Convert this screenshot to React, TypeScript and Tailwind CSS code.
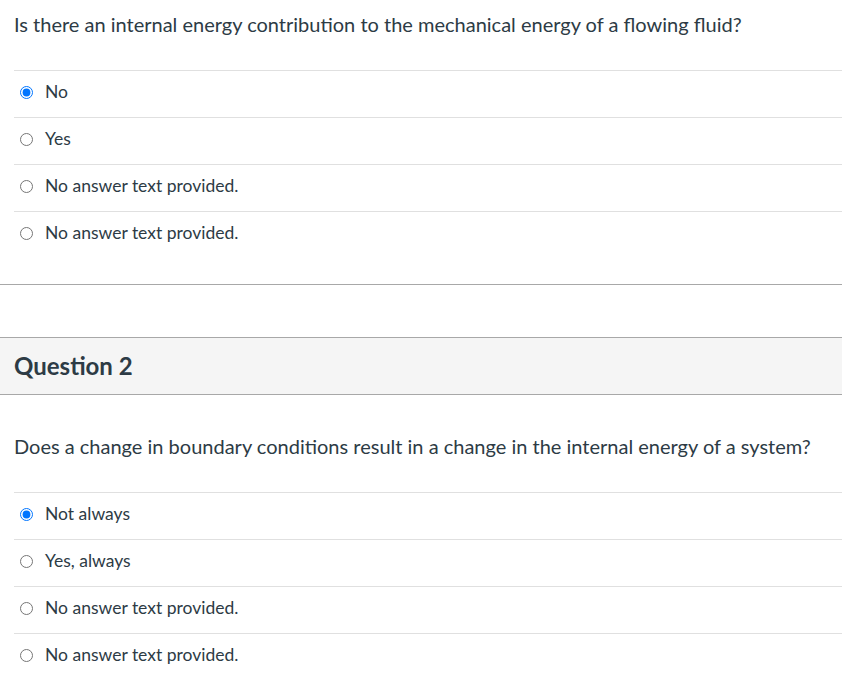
import { useState } from "react";

type Question = { id: string; text: string; answers: string[]; selected: number };

const first: Question = {
  id: "q1",
  text: "Is there an internal energy contribution to the mechanical energy of a flowing fluid?",
  answers: ["No", "Yes", "No answer text provided.", "No answer text provided."],
  selected: 0,
};

const second: Question = {
  id: "q2",
  text: "Does a change in boundary conditions result in a change in the internal energy of a system?",
  answers: ["Not always", "Yes, always", "No answer text provided.", "No answer text provided."],
  selected: 0,
};

function QuestionBody({ q }: { q: Question }) {
  const [picked, setPicked] = useState(q.selected);
  return (
    <div>
      <div className="pl-[14px] pt-[9px] pb-[31px] text-[20px] leading-[30px]">{q.text}</div>
      <div className="pl-[14px]">
        {q.answers.map((a, i) => (
          <label key={i} className="flex items-center border-t border-[#e0e0e0] pt-[9px] pb-[13px]">
            <input
              type="radio"
              name={q.id}
              checked={picked === i}
              onChange={() => setPicked(i)}
              className="ml-[6px] mr-[12px] h-[13px] w-[13px]"
            />
            <span className="text-[17.5px] leading-6">{a}</span>
          </label>
        ))}
      </div>
    </div>
  );
}

export default function App() {
  return (
    <div className="w-[842px] bg-white text-[#2d3b45]" style={{ fontFamily: "Lato, 'Noto Sans', sans-serif" }}>
      <QuestionBody q={first} />
      <div className="mt-[26px] border-t border-[#a8a8a8]" />
      <div className="mt-[52px] flex h-[58px] items-center border-y border-[#a8a8a8] bg-[#f5f5f5] px-[14px]">
        <h2 className="text-[24px] font-bold leading-7">Question 2</h2>
      </div>
      <div className="pt-[27px]">
        <QuestionBody q={second} />
      </div>
    </div>
  );
}
